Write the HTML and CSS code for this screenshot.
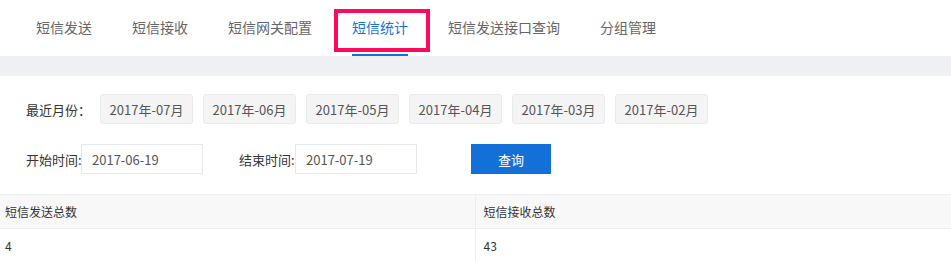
FILE: index.html
```html
<!DOCTYPE html>
<html lang="zh-CN">
<head>
<meta charset="utf-8">
<title>短信统计</title>
<link rel="stylesheet" href="styles.css">
</head>
<body>
<nav class="tabs">
  <a class="tab">短信发送</a>
  <a class="tab">短信接收</a>
  <a class="tab">短信网关配置</a>
  <a class="tab active">短信统计</a>
  <a class="tab">短信发送接口查询</a>
  <a class="tab">分组管理</a>
</nav>
<div class="band"></div>
<section class="filters">
  <div class="row months">
    <span class="label month-label">最近月份：</span>
    <button class="month">2017年-07月</button>
    <button class="month">2017年-06月</button>
    <button class="month">2017年-05月</button>
    <button class="month">2017年-04月</button>
    <button class="month">2017年-03月</button>
    <button class="month">2017年-02月</button>
  </div>
  <div class="row dates">
    <span class="label date-label">开始时间:</span>
    <input class="date" type="text" value="2017-06-19">
    <span class="label date-label end-label">结束时间:</span>
    <input class="date" type="text" value="2017-07-19">
    <button class="query">查询</button>
  </div>
</section>
<table class="stats">
  <thead>
    <tr><th>短信发送总数</th><th>短信接收总数</th></tr>
  </thead>
  <tbody>
    <tr><td>4</td><td>43</td></tr>
  </tbody>
</table>
</body>
</html>
```
FILE: styles.css
```css
* { box-sizing: border-box; }
body {
  margin: 0;
  font-family: "Noto Sans CJK SC", "Microsoft YaHei", sans-serif;
  color: #333;
  background: #fff;
}
.tabs {
  display: flex;
  height: 56px;
  padding-left: 16px;
}
.tab {
  position: relative;
  margin: 0 20px;
  height: 56px;
  line-height: 54px;
  font-size: 14px;
  color: #666;
  border-bottom: 2px solid transparent;
  white-space: nowrap;
}
.tab.active {
  color: #1a6fd6;
  border-bottom-color: #1270d8;
}
.tab.active::after {
  content: "";
  position: absolute;
  left: -18px;
  top: 9px;
  width: 88px;
  height: 35px;
  border: 4px solid #ff0a5a;
}
.band {
  height: 20px;
  background: #eff0f3;
}
.filters {
  padding: 18px 0 20px 26px;
}
.row {
  display: flex;
  align-items: center;
  height: 30px;
}
.row + .row { margin-top: 20px; }
.label {
  font-size: 13px;
  color: #333;
  white-space: nowrap;
}
.month-label { width: 74px; }
.month {
  width: 93px;
  height: 30px;
  margin-right: 10px;
  padding: 0;
  background: #f4f4f5;
  border: 1px solid #ebebeb;
  border-radius: 3px;
  font-family: inherit;
  font-size: 13px;
  color: #555;
}
.date-label { width: 55px; }
.end-label { margin-left: 36px; width: 56px; }
.date {
  width: 122px;
  height: 30px;
  padding: 0 0 0 10px;
  border: 1px solid #e6e9ef;
  font-family: inherit;
  font-size: 13px;
  color: #555;
  outline: none;
}
.query {
  margin-left: 54px;
  width: 80px;
  height: 30px;
  padding: 0;
  border: none;
  background: #1270d8;
  color: #fff;
  font-family: inherit;
  font-size: 13px;
}
.stats {
  width: 100%;
  border-collapse: collapse;
  table-layout: fixed;
  font-size: 12px;
  color: #333;
}
.stats th, .stats td {
  text-align: left;
  font-weight: normal;
  height: 34px;
  padding: 0 5px;
  border: 1px solid #eceef2;
}
.stats th:first-child, .stats td:first-child { border-left: none; width: 475px; }
.stats th:last-child, .stats td:last-child { padding-left: 8px; border-right: none; }
.stats th { background: #f8f8f8; }
```
